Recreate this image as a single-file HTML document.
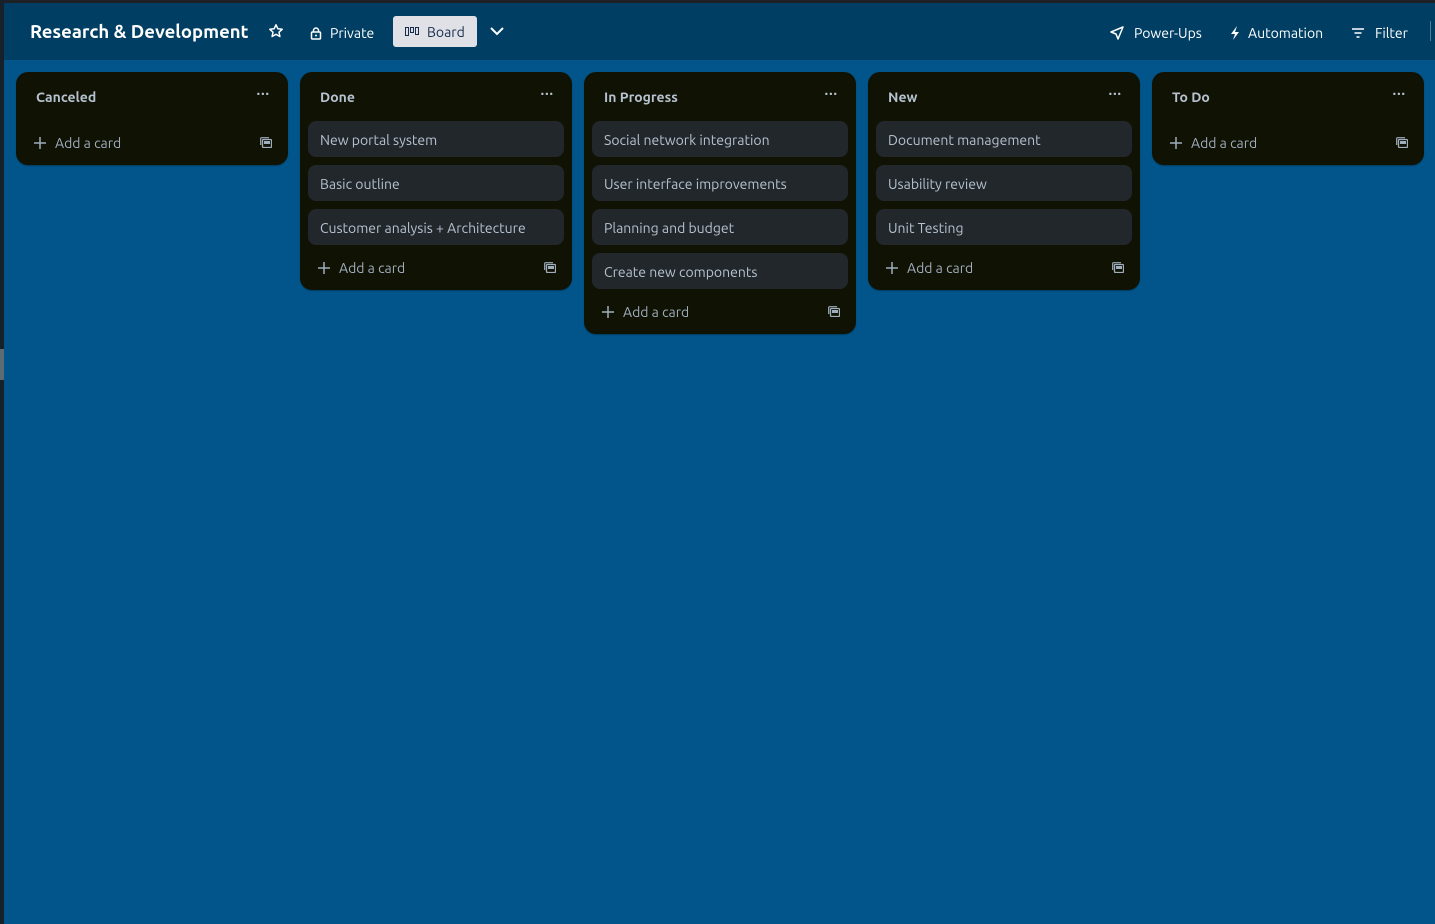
<!DOCTYPE html>
<html><head><meta charset="utf-8"><style>
*{box-sizing:border-box;margin:0;padding:0}
body{width:1435px;height:924px;overflow:hidden;background:#01558a;font-family:"Ubuntu","Liberation Sans",sans-serif;position:relative;color:#b6c2cf}
.top{position:absolute;left:0;top:0;width:1435px;height:3px;background:#1d2125}
.side{position:absolute;left:0;top:0;width:4px;height:924px;background:#16212b}
.side i{position:absolute;left:0;top:349px;width:4px;height:31px;background:#5d6b74}
.hdr{position:absolute;left:4px;top:3px;right:0;height:57px;background:#003f63;color:#fff}
.hdr .t{position:absolute;left:26px;top:19px;font-size:18.5px;font-weight:bold;letter-spacing:0px}
.hi{position:absolute;top:22px;font-size:14px;display:flex;align-items:center;gap:8px}
.board{position:absolute;left:389px;top:13px;width:84px;height:31px;background:#dfe1e6;border-radius:3px;color:#172b4d;font-size:14px;display:flex;align-items:center;padding-left:12px;gap:8px}
.list{position:absolute;top:72px;width:272px;background:#101204;border-radius:12px;box-shadow:0 1px 1px rgba(0,0,0,.3)}
.lt{position:absolute;left:20px;top:17px;font-size:14px;font-weight:bold;color:#b6c2cf}
.dots{position:absolute;right:18px;top:13px;font-size:14px;font-weight:bold;letter-spacing:1px;color:#b6c2cf}
.card{position:absolute;left:8px;width:256px;height:36px;background:#22272b;border-radius:8px;font-size:14px;color:#b6c2cf;padding:11px 12px 0;line-height:17px}
.add{position:absolute;left:17px;font-size:14px;color:#9fadbc;display:flex;align-items:center;gap:8px;height:20px}
.tmpl{position:absolute;right:16px;width:12px;height:11px}
</style></head><body>
<div class="top"></div><div class="side"><i></i></div>
<div class="hdr">
<div class="t">Research &amp; Development</div>
<div class="hi" style="left:264px;top:20px"><svg width="16" height="16" viewBox="0 0 16 16"><path d="M8 1.8l1.9 4 4.3.5-3.2 2.9.9 4.3L8 11.3 4.1 13.5l.9-4.3L1.8 6.3l4.3-.5z" fill="none" stroke="#fff" stroke-width="1.5" stroke-linejoin="round"/></svg></div>
<div class="hi" style="left:306px"><svg width="12" height="13" viewBox="0 0 12 13"><rect x="1.5" y="5" width="9" height="7" rx="1" fill="none" stroke="#fff" stroke-width="1.5"/><path d="M3.5 5V3.5a2.5 2.5 0 015 0V5" fill="none" stroke="#fff" stroke-width="1.5"/><circle cx="6" cy="8.5" r="1" fill="#fff"/></svg><span>Private</span></div>
<div class="board"><svg width="14" height="10" viewBox="0 0 14 10"><rect x="0.5" y="0.5" width="3" height="8" fill="none" stroke="#172b4d"/><rect x="5.5" y="0.5" width="3" height="5" fill="none" stroke="#172b4d"/><rect x="10.5" y="0.5" width="3" height="7" fill="none" stroke="#172b4d"/></svg><span>Board</span></div>
<div class="hi" style="left:485px;top:22px"><svg width="16" height="12" viewBox="0 0 16 12"><path d="M2 3l6 6 6-6" fill="none" stroke="#fff" stroke-width="2"/></svg></div>
<div class="hi" style="left:1106px"><svg width="14" height="14" viewBox="0 0 14 14"><path d="M13 1L1 6l5 2 2 5z" fill="none" stroke="#fff" stroke-width="1.5" stroke-linejoin="round"/></svg><span style="margin-left:2px">Power-Ups</span></div>
<div class="hi" style="left:1226px"><svg width="10" height="14" viewBox="0 0 10 14"><path d="M7 0L1 8h4l-2 6 6-8H5z" fill="#fff"/></svg><span>Automation</span></div>
<div class="hi" style="left:1348px"><svg width="12" height="10" viewBox="0 0 12 10"><path d="M0 1h12M2.5 5h7M4.5 9h3" stroke="#fff" stroke-width="1.5"/></svg><span style="margin-left:3px">Filter</span></div>
<div style="position:absolute;left:1426px;top:18px;width:1px;height:20px;background:#5a7a90"></div>
</div>

<div class="list" style="left:16px;height:93px"><div class="lt">Canceled</div><div class="dots">···</div>
<div class="add" style="top:61px"><svg width="14" height="14" viewBox="0 0 14 14"><path d="M7 1v12M1 7h12" stroke="#9fadbc" stroke-width="1.5"/></svg>Add a card</div><svg class="tmpl" style="top:65px" viewBox="0 0 12 11"><rect x="2.5" y="2.5" width="9" height="8" rx="1" fill="none" stroke="#9fadbc" stroke-width="1.3"/><path d="M0.7 8V1.5a.8.8 0 01.8-.8H9" fill="none" stroke="#9fadbc" stroke-width="1.2"/><rect x="4" y="4" width="6" height="3" fill="#9fadbc"/></svg></div>

<div class="list" style="left:300px;height:218px"><div class="lt">Done</div><div class="dots">···</div>
<div class="card" style="top:49px">New portal system</div>
<div class="card" style="top:93px">Basic outline</div>
<div class="card" style="top:137px">Customer analysis + Architecture</div>
<div class="add" style="top:186px"><svg width="14" height="14" viewBox="0 0 14 14"><path d="M7 1v12M1 7h12" stroke="#9fadbc" stroke-width="1.5"/></svg>Add a card</div><svg class="tmpl" style="top:190px" viewBox="0 0 12 11"><rect x="2.5" y="2.5" width="9" height="8" rx="1" fill="none" stroke="#9fadbc" stroke-width="1.3"/><path d="M0.7 8V1.5a.8.8 0 01.8-.8H9" fill="none" stroke="#9fadbc" stroke-width="1.2"/><rect x="4" y="4" width="6" height="3" fill="#9fadbc"/></svg></div>

<div class="list" style="left:584px;height:262px"><div class="lt">In Progress</div><div class="dots">···</div>
<div class="card" style="top:49px">Social network integration</div>
<div class="card" style="top:93px">User interface improvements</div>
<div class="card" style="top:137px">Planning and budget</div>
<div class="card" style="top:181px">Create new components</div>
<div class="add" style="top:230px"><svg width="14" height="14" viewBox="0 0 14 14"><path d="M7 1v12M1 7h12" stroke="#9fadbc" stroke-width="1.5"/></svg>Add a card</div><svg class="tmpl" style="top:234px" viewBox="0 0 12 11"><rect x="2.5" y="2.5" width="9" height="8" rx="1" fill="none" stroke="#9fadbc" stroke-width="1.3"/><path d="M0.7 8V1.5a.8.8 0 01.8-.8H9" fill="none" stroke="#9fadbc" stroke-width="1.2"/><rect x="4" y="4" width="6" height="3" fill="#9fadbc"/></svg></div>

<div class="list" style="left:868px;height:218px"><div class="lt">New</div><div class="dots">···</div>
<div class="card" style="top:49px">Document management</div>
<div class="card" style="top:93px">Usability review</div>
<div class="card" style="top:137px">Unit Testing</div>
<div class="add" style="top:186px"><svg width="14" height="14" viewBox="0 0 14 14"><path d="M7 1v12M1 7h12" stroke="#9fadbc" stroke-width="1.5"/></svg>Add a card</div><svg class="tmpl" style="top:190px" viewBox="0 0 12 11"><rect x="2.5" y="2.5" width="9" height="8" rx="1" fill="none" stroke="#9fadbc" stroke-width="1.3"/><path d="M0.7 8V1.5a.8.8 0 01.8-.8H9" fill="none" stroke="#9fadbc" stroke-width="1.2"/><rect x="4" y="4" width="6" height="3" fill="#9fadbc"/></svg></div>

<div class="list" style="left:1152px;height:93px"><div class="lt">To Do</div><div class="dots">···</div>
<div class="add" style="top:61px"><svg width="14" height="14" viewBox="0 0 14 14"><path d="M7 1v12M1 7h12" stroke="#9fadbc" stroke-width="1.5"/></svg>Add a card</div><svg class="tmpl" style="top:65px" viewBox="0 0 12 11"><rect x="2.5" y="2.5" width="9" height="8" rx="1" fill="none" stroke="#9fadbc" stroke-width="1.3"/><path d="M0.7 8V1.5a.8.8 0 01.8-.8H9" fill="none" stroke="#9fadbc" stroke-width="1.2"/><rect x="4" y="4" width="6" height="3" fill="#9fadbc"/></svg></div>
</body></html>
